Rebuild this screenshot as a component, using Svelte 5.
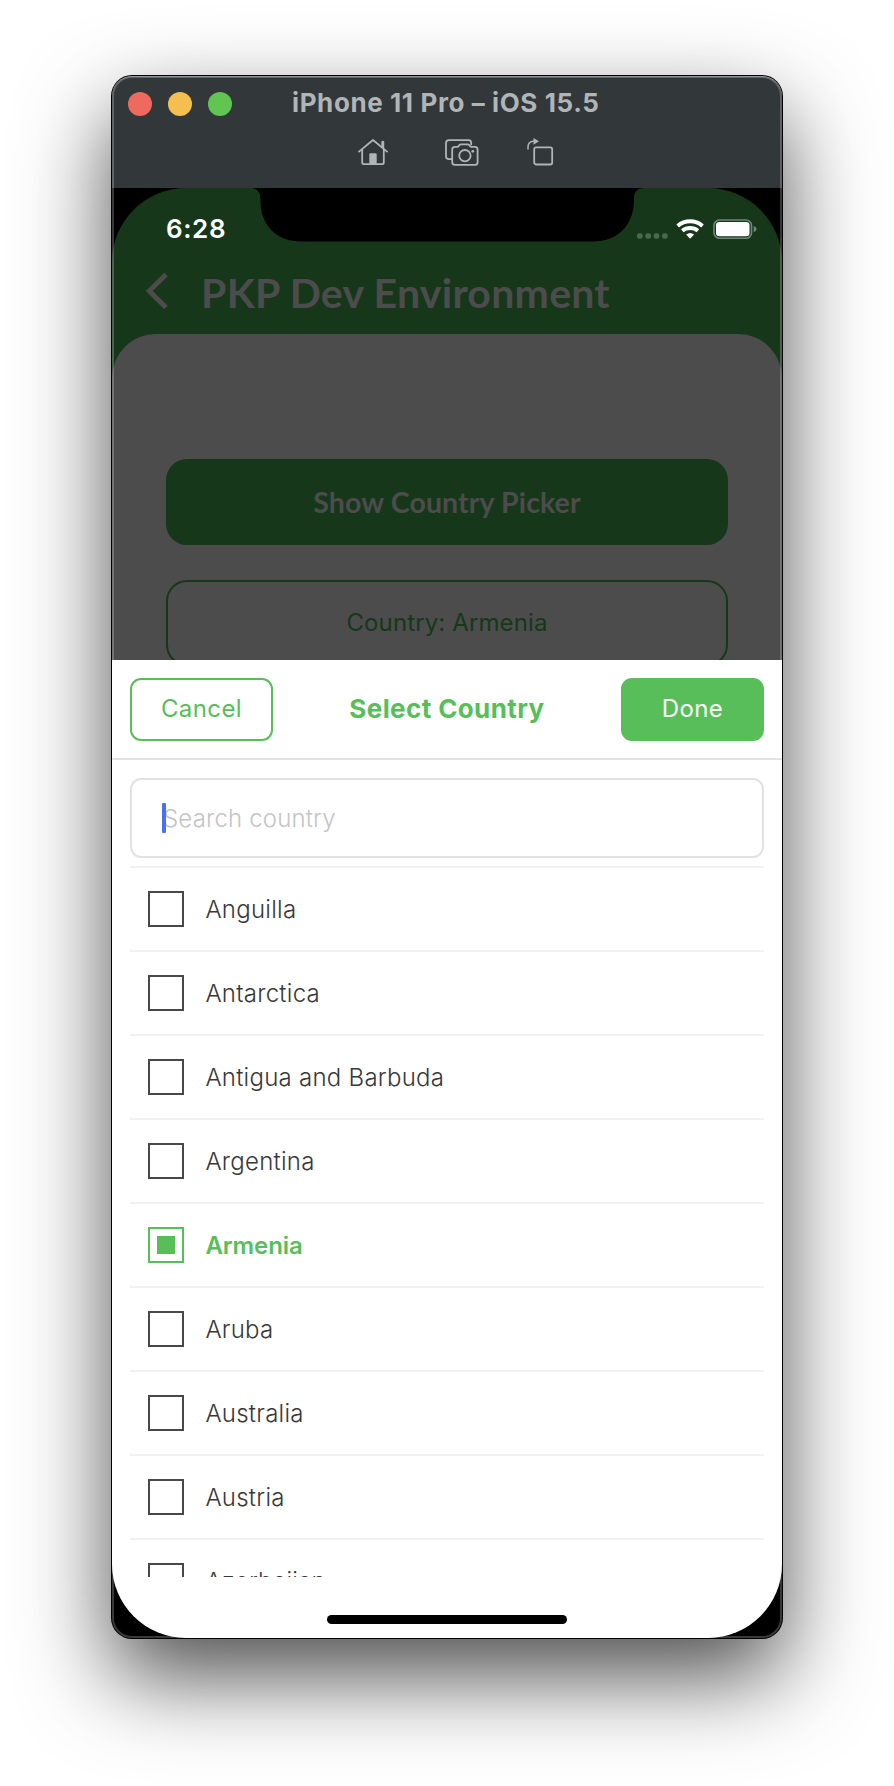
<script>
  let selected = $state('Armenia');
  const countries = [
    'Anguilla', 'Antarctica', 'Antigua and Barbuda', 'Argentina', 'Armenia',
    'Aruba', 'Australia', 'Austria', 'Azerbaijan'
  ];
</script>

<main>
  <div class="window">
    <header class="titlebar">
      <div class="title-row">
        <div class="lights"><i class="red"></i><i class="yellow"></i><i class="green"></i></div>
        <h1>iPhone 11 Pro – iOS 15.5</h1>
      </div>
      <div class="tools">
        <svg width="30" height="30" viewBox="0 0 30 30">
          <path d="M1 13.6 15 2 29 13.6M4.2 11.5V24.6Q4.2 26.2 5.8 26.2H24.2Q25.8 26.2 25.8 24.6V11.5M24.8 9.5V3.6" />
          <path class="solid" d="M11.3 26V16.4Q11.3 15.3 12.4 15.3H17.6Q18.7 15.3 18.7 16.4V26ZM23.4 3.2H26.2V11L23.4 8.7Z" />
        </svg>
        <svg width="34" height="30" viewBox="0 0 34 30">
          <path d="M6.8 21.2H4Q1 21.2 1 18.2V5.2Q1 2.2 4 2.2H23.6Q26 2.2 26.2 4.8V6.4" />
          <path d="M10 8.9H12.2Q13.2 8.9 13.7 8.1L14.4 7.1Q15 6.3 16 6.3H22.6Q23.6 6.3 24.2 7.1L24.9 8.1Q25.4 8.9 26.4 8.9H30Q32.6 8.9 32.6 11.5V24.2Q32.6 26.8 30 26.8H10Q7.2 26.8 7.2 24.2V11.5Q7.2 8.9 10 8.9Z" />
          <circle cx="19.9" cy="17.7" r="5.7" />
          <circle class="solid" cx="27.8" cy="13.3" r="1.4" />
        </svg>
        <svg width="28" height="30" viewBox="0 0 28 30">
          <rect x="7.2" y="9.3" width="18" height="17.2" rx="2" />
          <path class="thin" d="M1 11V9Q1 4 6 3.2H8" />
          <path class="solid" d="M6.5 0 12 3.3 6.5 6.7Z" />
        </svg>
      </div>
    </header>

    <section class="device">
      <div class="screen">
        <svg class="notch" width="404" height="55" viewBox="0 0 404 55">
          <path d="M5 0H399C392 0 389 4 389 11V14C388 38 372 53.5 348 53.5H56C32 53.5 16 38 15.500 14V11C15.500 4 12 0 5 0Z" />
        </svg>
        <div class="status">
          <span class="clock">6:28</span>
          <svg width="122" height="24" viewBox="0 0 122 24">
            <g fill="#47694c">
              <rect x="1" y="14.200" width="5.600" height="5.600" rx="2" /><rect x="9.400" y="14.200" width="5.600" height="5.600" rx="2" />
              <rect x="17.700" y="14.200" width="5.600" height="5.600" rx="2" /><rect x="26.100" y="14.200" width="5.600" height="5.600" rx="2" />
            </g>
            <g fill="none" stroke="#fff" stroke-width="4">
              <path d="M41.700 6.900A19 19 0 0 1 66.500 6.900" />
              <path d="M46.300 11.700A12.200 12.200 0 0 1 61.900 11.700" />
            </g>
            <path fill="#fff" d="M50.100 15.600Q54.100 12.500 58.100 15.600L54.100 19.800Z" />
            <rect x="78" y="1" width="37.500" height="18.200" rx="5.500" fill="none" stroke="#72867a" stroke-width="1.600" />
            <rect x="80" y="3" width="33.500" height="14.200" rx="3.300" fill="#fff" />
            <path fill="#72867a" d="M117.700 7Q120.600 8.200 120.600 10.100T117.700 13.300Z" />
          </svg>
        </div>
        <div class="navbar">
          <svg width="24" height="38" viewBox="0 0 24 38"><path d="M20 2.500 3.200 19 20 35.500" /></svg>
          <h2>PKP Dev Environment</h2>
        </div>
        <div class="body">
          <button class="show">Show Country Picker</button>
          <button class="current">Country: {selected}</button>
        </div>
        <div class="sheet">
          <div class="sheet-head">
            <button class="cancel">Cancel</button>
            <strong>Select Country</strong>
            <button class="done">Done</button>
          </div>
          <div class="search"><span class="caret"></span><span class="hint">Search country</span></div>
          <ul>
            {#each countries as country}
              <li class:active={country === selected}>
                <span class="box"></span><span class="name">{country}</span>
              </li>
            {/each}
          </ul>
          <div class="home"></div>
        </div>
      </div>
    </section>
  </div>
</main>

<style>
  :global(body) { background: #fff; }
  main {
    box-sizing: border-box;
    height: 1786px;
    padding: 76px 112px 0;
    overflow: hidden;
    font-family: Inter, "Liberation Sans", sans-serif;
  }
  h1, h2, ul { margin: 0; padding: 0; font-size: inherit; }
  button { font: inherit; padding: 0; margin: 0; box-sizing: border-box; display: block; }
  .window {
    position: relative;
    width: 670px;
    height: 1562px;
    border-radius: 20px;
    background: #000;
    box-shadow: 0 0 0 1px #000, 0 38px 90px rgba(0, 0, 0, .7);
  }
  .window::after {
    content: '';
    position: absolute;
    inset: 0;
    border-radius: 20px;
    border: 2px solid rgba(255, 255, 255, .22);
    pointer-events: none;
  }
  .titlebar {
    height: 112px;
    box-sizing: border-box;
    background: #32373a;
    border-radius: 20px 20px 0 0;
    border-top: 1px solid #777b7d;
    overflow: hidden;
  }
  .title-row { display: flex; align-items: center; height: 54px; padding-left: 16px; }
  .lights { display: flex; gap: 16px; width: 164px; }
  .lights i { width: 24px; height: 24px; border-radius: 50%; }
  .red { background: #ee695e; }
  .yellow { background: #f5bf4f; }
  .green { background: #61c554; }
  h1 { font-size: 26px; font-weight: 700; letter-spacing: .6px; color: #b0b5b8; white-space: nowrap; padding-bottom: 3px; }
  .tools { display: flex; padding: 7px 0 0 246px; }
  .tools svg { fill: none; stroke: #b0b5b8; stroke-width: 1.8; stroke-linejoin: round; stroke-linecap: round; }
  .tools svg:nth-child(2) { margin-left: 56.500px; }
  .tools svg:nth-child(3) { margin-left: 48px; }
  .tools .solid { fill: #b0b5b8; stroke: none; }
  .tools .thin { stroke-width: 1.5; }
  .device { height: 1450px; }
  .screen {
    position: relative;
    height: 1450px;
    border-radius: 74px;
    overflow: hidden;
    background: #17371b;
  }
  .notch { position: absolute; left: 133px; top: 0; }
  .status {
    display: flex;
    justify-content: space-between;
    align-items: flex-start;
    height: 80px;
    box-sizing: border-box;
    padding: 31px 24px 0 54px;
  }
  .clock { font-size: 26px; line-height: 20px; font-weight: 600; letter-spacing: .6px; color: #fff; }
  .navbar { display: flex; align-items: center; height: 66px; padding-left: 34px; }
  .navbar svg { fill: none; stroke: #4c4c4c; stroke-width: 5; stroke-linecap: butt; margin-top: -21px; }
  h2 { font: 700 41px/50px Lato, sans-serif; letter-spacing: .25px; color: #4c4c4c; margin: -17px 0 0 31px; white-space: nowrap; }
  .body {
    height: 326px;
    box-sizing: border-box;
    padding: 125px 54px 0;
    background: #4c4c4c;
    border-radius: 44px 44px 0 0;
    overflow: hidden;
  }
  .show {
    width: 562px;
    height: 86px;
    border: 0;
    border-radius: 21px;
    background: #17371b;
    color: #4c4c4c;
    font: 700 28.5px/85px Lato, sans-serif;
    letter-spacing: .12px;
  }
  .current {
    width: 562px;
    height: 86px;
    margin-top: 35px;
    padding-bottom: 1px;
    border: 2px solid #17371b;
    border-radius: 21px;
    background: none;
    color: #17371b;
    font-size: 24px;
    letter-spacing: .12px;
  }
  .sheet { height: 978px; background: #fff; }
  .sheet-head {
    display: flex;
    align-items: center;
    justify-content: space-between;
    height: 100px;
    box-sizing: border-box;
    padding: 0 18px;
    border-bottom: 2px solid #e2e2e2;
    color: #57be5a;
  }
  .sheet-head button { width: 143px; height: 63px; padding-bottom: 2px; border-radius: 11px; font-size: 24px; letter-spacing: .4px; }
  .cancel { border: 2px solid #57be5a; background: #fff; color: #57be5a; }
  .done { border: 0; background: #57be5a; color: #fff; }
  strong { font-size: 26px; letter-spacing: .4px; padding-bottom: 1px; }
  .search {
    display: flex;
    align-items: center;
    box-sizing: border-box;
    height: 80px;
    margin: 18px 18px 8px;
    padding-left: 30px;
    border: 2px solid #e2e2e2;
    border-radius: 11px;
  }
  .caret { width: 4px; height: 30px; border-radius: 1px; background: #4a70ec; z-index: 1; }
  .hint { font-size: 24px; font-weight: 300; letter-spacing: .17px; color: #c4c4c4; margin-left: -3px; }
  ul { height: 711px; margin: 0 18px; overflow: hidden; list-style: none; border-top: 2px solid #f2f2f2; box-sizing: border-box; }
  li {
    display: flex;
    align-items: center;
    height: 84px;
    box-sizing: border-box;
    padding-left: 18px;
    border-bottom: 2px solid #f2f2f2;
    color: #383838;
    font-size: 24px;
    font-weight: 300;
    letter-spacing: .26px;
  }
  .box { display: grid; place-items: center; width: 36px; height: 36px; box-sizing: border-box; border: 2px solid #484848; margin-right: 21.400px; }
  .active { color: #57be5a; font-weight: 600; letter-spacing: -.05px; }
  .active .box { border-color: #57be5a; }
  .active .box::after { content: ''; width: 18px; height: 18px; background: #57be5a; }
  .home { width: 240px; height: 9px; margin: 38px auto 0; border-radius: 5px; background: #000; }
</style>
